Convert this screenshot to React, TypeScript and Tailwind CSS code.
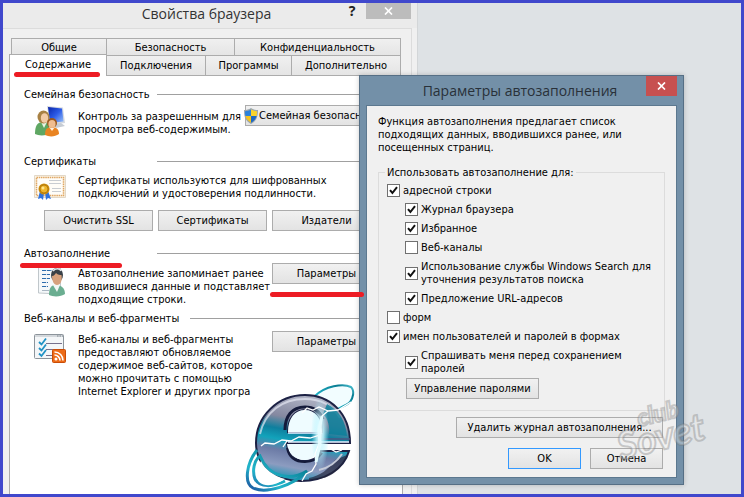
import React, { useId } from 'react';

const cx = (...parts: (string | false | undefined)[]) => parts.filter(Boolean).join(' ');

const Button = ({ children, className, primary }: { children: React.ReactNode; className?: string; primary?: boolean }) => (
  <button
    type="button"
    className={cx(
      'flex h-[21px] shrink-0 items-center whitespace-nowrap border bg-linear-to-b from-[#f1f1f1] to-[#e3e3e3]',
      primary ? 'border-[#3399ff]' : 'border-[#acacac]',
      className,
    )}
  >
    {children}
  </button>
);

const Check = ({ label, nested, checked }: { label: React.ReactNode; nested?: boolean; checked?: boolean }) => {
  const id = useId();
  return (
    <div className={cx('flex items-center gap-[3px]', nested && 'pl-[18px]')}>
      <span className="relative size-[13px] shrink-0">
        <input
          id={id}
          type="checkbox"
          defaultChecked={checked}
          className="peer block size-[13px] appearance-none border border-[#707070] bg-white"
        />
        <svg viewBox="0 0 13 13" className="pointer-events-none absolute inset-0 hidden peer-checked:block">
          <path d="M3 6.2 5.4 9 10 3.2" fill="none" stroke="#111" strokeWidth="2" />
        </svg>
      </span>
      <label htmlFor={id} className="whitespace-nowrap">{label}</label>
    </div>
  );
};

const Heading = ({ children, wide }: { children: React.ReactNode; wide?: boolean }) => (
  <div className="flex items-center">
    <h2 className={cx('shrink-0 whitespace-nowrap', wide ? 'w-[166px]' : 'w-[133px]')}>{children}</h2>
    <span className="h-px grow bg-[#a0a0a0]" />
  </div>
);

const FamilyIcon = () => (
  <svg width="32" height="32" viewBox="0 0 32 32">
    <defs>
      <linearGradient id="screen" x1="0" y1="0" x2="1" y2="1">
        <stop offset="0" stopColor="#0a24a8" />
        <stop offset=".5" stopColor="#2c5ce8" />
        <stop offset="1" stopColor="#9cc4f8" />
      </linearGradient>
    </defs>
    <path d="M13 1 29 2.500 31 18 16 20z" fill="#d5d9e0" />
    <path d="M14 2 28 3.500 29.500 16.500 16 18z" fill="url(#screen)" />
    <path d="m19 19 8-1 4 3-9 2z" fill="#c6ccd4" />
    <path d="M1 29c0-8 2-12 8-12 5 0 8 4 8 11-5 3-12 3-16 1z" fill="#5fa763" />
    <path d="m7 17 3 6 3-6z" fill="#e8f3e3" />
    <ellipse cx="9.500" cy="12" rx="6" ry="6.500" fill="#a88143" />
    <ellipse cx="10.500" cy="13" rx="3.700" ry="4.800" fill="#f3cba5" />
    <path d="M11 30c0-6 2-8 7-8s7 3 7 7c-4 3-10 3-14 1z" fill="#e98422" />
    <path d="m15 22 3 4 3-4z" fill="#fff2df" />
    <circle cx="18" cy="18" r="5" fill="#9a571c" />
    <ellipse cx="18" cy="19" rx="3.600" ry="4" fill="#f0bd8f" />
  </svg>
);

const CertificateIcon = () => (
  <svg width="32" height="27" viewBox="0 0 32 27">
    <path d="M.5 1.500h31v22H.5z" fill="#fbf3e4" stroke="#e2d8c8" />
    <path d="M2.500 3.500h27v18h-27z" fill="#fffdf8" stroke="#dfa663" strokeWidth="1.500" strokeDasharray="1.500 .7" />
    <path d="M15 6.500h12M15 9.500h12M18 14.500h9M18 17.500h9" stroke="#c9cdd2" />
    <path d="m6 17-2 8 3-1 2 2 1-7zM11 18l1 8 2-2 3 1-3-8z" fill="#2e72df" />
    <circle cx="10" cy="15" r="5.500" fill="#c98a0c" />
    <circle cx="10" cy="15" r="4" fill="#efb62c" stroke="#a46c05" strokeWidth=".7" />
    <circle cx="9" cy="14" r="1.500" fill="#ffe58c" />
  </svg>
);

const PersonIcon = () => (
  <svg width="28" height="30" viewBox="0 0 28 30">
    <path d="M.5 0h22v27l-22-1z" fill="#f5f8fa" stroke="#c0c7cb" />
    <path d="M4 3.500h10M4 7.500h8M4 11.500h8M4 15.500h6M4 19.500h6" stroke="#2d6cad" strokeWidth="1.200" strokeDasharray="4 .8" />
    <path d="M4 23.500h7" stroke="#aab7c3" />
    <path d="M11 28c0-7 2-10 7-10s9 3 9 9c-4 3-12 3-16 1z" fill="#6bae91" />
    <path d="m15 18 4 7 3-7z" fill="#f2f6f5" />
    <ellipse cx="19" cy="8" rx="6" ry="7" fill="#394047" />
    <path d="M14 9c2 0 3-2 4-3 2 2 4 2 5.500 2 1 6-1 10-4.500 10-3 0-5-4-5-9z" fill="#d6a17d" />
    <path d="M15 4c2-3 7-3 8 0" fill="none" stroke="#e1e5e8" strokeWidth="1.500" />
  </svg>
);

const FeedIcon = () => (
  <svg width="32" height="29" viewBox="0 0 32 29">
    <rect x=".5" y=".5" width="29" height="24" rx="1" fill="#f4f6f8" stroke="#8c949b" />
    <path d="M1 2h28" stroke="#d4d8dc" strokeWidth="2" />
    <path d="M23 2h1.500m1 0H27m1 0h1" stroke="#7c858d" />
    <path d="M12 9.500h16M12 15.500h12M12 21.500h6" stroke="#76708c" />
    <path d="m5 8 2.500 2.500L12 4.500M5 14l2.500 2.500 4.500-6M5 19.500 7.500 22l4.500-6" fill="none" stroke="#2192c5" strokeWidth="1.800" />
    <rect x="18.500" y="15.500" width="13" height="13" rx="1" fill="#ed6b17" stroke="#c94c07" />
    <circle cx="22" cy="25" r="1.500" fill="#fff" />
    <path d="M20.500 21c3 0 5.500 2.500 5.500 5.500M20.500 18c5 0 8.500 4 8.500 8.500" fill="none" stroke="#fff" strokeWidth="1.600" />
  </svg>
);

const ShieldIcon = () => (
  <svg width="14" height="16" viewBox="0 0 14 16" className="-ml-[2px] shrink-0">
    <path d="M7 0c2 1.500 4.500 2 7 2 0 7-1.500 11-7 14C1.500 13 0 9 0 2c2.500 0 5-.5 7-2z" fill="#9aa5ae" />
    <path d="M7 1.500V8H1.400C1.100 6.500 1 5 1 3.200c2.200 0 4.300-.6 6-1.700z" fill="#2a82da" />
    <path d="M7 1.500V8h5.600c.3-1.500.4-3 .4-4.800-2.200 0-4.300-.6-6-1.700z" fill="#f8d32b" />
    <path d="M7 8v6.700C4 13 2.200 11 1.400 8z" fill="#f4c41c" />
    <path d="M7 8v6.700c3-1.700 4.800-3.700 5.600-6.700z" fill="#1b68c4" />
  </svg>
);

const ExplorerLogo = () => (
  <svg width="106" height="112" viewBox="0 0 106 112" className="overflow-visible">
    <defs>
      <linearGradient id="body" x1=".6" y1="0" x2=".4" y2="1">
        <stop offset="0" stopColor="#b4b7c8" />
        <stop offset=".3" stopColor="#8488a0" />
        <stop offset=".44" stopColor="#0e7f9e" />
        <stop offset=".56" stopColor="#12a3bb" />
        <stop offset=".68" stopColor="#6c7ba6" />
        <stop offset=".85" stopColor="#8c9cc0" />
        <stop offset="1" stopColor="#1593b5" />
      </linearGradient>
      <linearGradient id="orbit" x1="0" y1="1" x2="1" y2="0">
        <stop offset="0" stopColor="#1c4c9c" />
        <stop offset=".3" stopColor="#22b6cb" />
        <stop offset=".8" stopColor="#087b91" />
        <stop offset="1" stopColor="#55cbdb" />
      </linearGradient>
      <radialGradient id="glow">
        <stop offset="0" stopColor="#fff" />
        <stop offset=".4" stopColor="#cdf8ff" stopOpacity=".8" />
        <stop offset="1" stopColor="#a7effa" stopOpacity="0" />
      </radialGradient>
    </defs>
    <path d="M66 14C76 4 94 1 102 5c4 4 2 11-1 15-4 4-12 6-18 10" fill="#f2fdff" stroke="url(#orbit)" strokeWidth="2" />
    <path
      fillRule="evenodd"
      d="M101 61C101 30 80 13 56 13 29 13 7 34 7 61c0 24 21 38 45 38 24 0 43-12 48-30H72c-3 7-9 10-16 10-11 0-18-8-18-18zM39 50c0-14 7-22 17-22s17 8 17 22z"
      fill="url(#body)"
      stroke="#1c2144"
      strokeWidth="2"
    />
    <path d="M39 50c0-14 7-22 17-22s17 8 17 22zM38 62h32c0 8-6 16-14 16-11 0-17-7-18-16z" fill="#effcff" />
    <path d="M11 52c5-22 22-35 45-35 16 0 28 7 35 19" fill="none" stroke="#e4e7f2" strokeWidth="2" opacity=".7" />
    <path d="M78 22c12 6 19 18 20 32L80 52c1-6-1-16-6-20z" fill="#0a7f9a" opacity=".85" />
    <path d="M36 48c0-14 7-23 20-23 9 0 15 5 18 12" fill="none" stroke="#141a3a" strokeWidth="3" />
    <path d="M39 51h34M39 60h61" stroke="#e8f0ff" strokeWidth="1.500" />
    <path d="M74 57h27" stroke="#4b5480" strokeWidth="1.500" />
    <path d="M38 66c2 10 9 14 18 14 7 0 13-3 17-9" fill="none" stroke="#141a3a" strokeWidth="2" />
    <path d="M60 96c11-2 20-9 26-18l12-5C92 89 80 98 60 98z" fill="#23263d" opacity=".7" />
    <path d="M70 88c9-2 17-7 23-16" fill="none" stroke="#c5cad8" strokeWidth="2" />
    <path
      d="M8 68C-3 82-5 101 4 106c13 6 40-2 54-17-16 10-38 7-47-15-6 4-8 15-5 23 5 9 18 8 30 2"
      fill="none"
      stroke="url(#orbit)"
      strokeWidth="3"
    />
    <path d="M12 79c4 9 13 15 24 18-9 6-19 9-26 3-4-6-2-14 2-21z" fill="#fff" />
    <ellipse cx="71" cy="52" rx="9" ry="36" fill="url(#glow)" />
    <path
      d="m102 20-13 8-10 1-6 5-2 14-1 14-4 10 1 10-4 7-6 3-4 7M79 29l-9-4-6 3-6-2-5 5M71 53l-10 3-11-1-8 4-9-1-8 4-9-1-4 3m26-5-4 6m46 1 7 4 6-2"
      fill="none"
      stroke="#fff"
      strokeWidth="1.300"
    />
    <path d="m73 34-3 14 1 14-4 18" fill="none" stroke="#e4fcff" strokeWidth="3" />
  </svg>
);

const Tab = ({ children, className }: { children: React.ReactNode; className?: string }) => (
  <button
    type="button"
    role="tab"
    className={cx('flex items-center justify-center border border-b-0 border-[#acacac] bg-linear-to-b from-[#f0f0f0] to-[#e5e5e5]', className)}
  >
    {children}
  </button>
);

const CloseMark = () => (
  <svg width="9" height="8" viewBox="0 0 9 8">
    <path d="m1 .5 7 7m0-7-7 7" stroke="#fff" strokeWidth="1.700" />
  </svg>
);

const BrowserProperties = () => (
  <section className="absolute -top-px bottom-0 left-0 w-[415px] border-r border-[#d3d6d8] bg-[#f0f0f0]">
    <header className="flex h-[26px] items-start justify-end bg-[#ebebeb] pr-[6px]">
      <h1 className="grow pt-[2px] pl-[130px] text-center font-[Open_Sans,Noto_Sans,sans-serif] text-[14px] leading-[20px] whitespace-nowrap text-[#333]">
        Свойства браузера
      </h1>
      <button type="button" aria-label="Справка" className="ml-[62px] w-5 font-[Noto_Sans,sans-serif] text-sm leading-[17px] font-bold text-[#222]">?</button>
      <button type="button" aria-label="Закрыть" className="ml-1 flex h-[17px] w-[45px] items-center justify-center bg-[#bcbcbc]">
        <CloseMark />
      </button>
    </header>
    <div className="mr-[5px] flex h-full flex-col border-t border-r border-[#dcdcdc] pt-[9px] pr-[8px] pl-[6px]">
      <div role="tablist" className="px-[2px]">
        <div className="flex h-[17px]">
          <Tab className="w-[95px] border-r-0">Общие</Tab>
          <Tab className="w-[128px] border-r-0">Безопасность</Tab>
          <Tab className="grow">Конфиденциальность</Tab>
        </div>
        <div className="flex h-[20px]">
          <button
            type="button"
            role="tab"
            aria-selected="true"
            className="z-10 -mt-px -ml-[2px] -mb-px w-[98px] border border-b-0 border-[#acacac] bg-white pb-[2px]"
          >
            Содержание
          </button>
          <Tab className="w-[99px] border-l-0">Подключения</Tab>
          <Tab className="w-[86px] border-l-0">Программы</Tab>
          <Tab className="grow border-l-0">Дополнительно</Tab>
        </div>
      </div>
      <div className="grow border border-b-0 border-[#acacac] bg-white pt-[12px] pr-[20px] pl-[14px]">
        <Heading>Семейная безопасность</Heading>
        <div className="mt-1 flex items-start">
          <div className="w-[54px] shrink-0 pl-[10px]"><FamilyIcon /></div>
          <p className="w-[167px] shrink-0 pt-[5px] whitespace-nowrap">Контроль за разрешенным для<br />просмотра веб-содержимым.</p>
          <Button className="w-[137px] gap-px"><ShieldIcon />Семейная безопасность</Button>
        </div>
        <div className="mt-[18px]"><Heading>Сертификаты</Heading></div>
        <div className="mt-[6px] flex items-start">
          <div className="w-[54px] shrink-0 pl-[10px]"><CertificateIcon /></div>
          <p className="whitespace-nowrap">Сертификаты используются для шифрованных<br />подключений и удостоверения подлинности.</p>
        </div>
        <div className="mt-[9px] flex gap-[5px] pl-5">
          <Button className="w-[109px] justify-center">Очистить SSL</Button>
          <Button className="w-[109px] justify-center">Сертификаты</Button>
          <Button className="w-[109px] justify-center">Издатели</Button>
        </div>
        <div className="mt-4"><Heading>Автозаполнение</Heading></div>
        <div className="mt-[3px] flex items-start">
          <div className="w-[54px] shrink-0 pt-1 pl-[14px]"><PersonIcon /></div>
          <p className="w-[194px] shrink-0 pt-1 whitespace-nowrap">Автозаполнение запоминает ранее<br />вводившиеся данные и подставляет<br />подходящие строки.</p>
          <Button className="w-[109px] justify-center">Параметры</Button>
        </div>
        <div className="mt-[6px]"><Heading wide>Веб-каналы и веб-фрагменты</Heading></div>
        <div className="mt-[6px] flex items-start">
          <div className="w-[54px] shrink-0 pt-[3px] pl-[10px]"><FeedIcon /></div>
          <p className="w-[194px] shrink-0 pt-[2px] whitespace-nowrap">
            Веб-каналы и веб-фрагменты<br />предоставляют обновляемое<br />содержимое веб-сайтов, которое<br />можно прочитать с помощью<br />Internet Explorer и других програ
          </p>
          <Button className="w-[109px] justify-center">Параметры</Button>
        </div>
      </div>
    </div>
  </section>
);

const AutofillDialog = () => (
  <section className="absolute top-[72px] left-[356px] w-[325px] border border-[#566f85] bg-[#7390a8] px-[6px] pb-[6px] shadow-[0_0_5px_rgba(0,0,0,0.2)]">
    <header className="flex h-[29px] items-start">
      <h1 className="grow pt-[5px] pl-[28px] text-center font-[Open_Sans,Noto_Sans,sans-serif] text-[14px] leading-[20px] whitespace-nowrap text-[#293139]">
        Параметры автозаполнения
      </h1>
      <button type="button" aria-label="Закрыть" className="flex h-5 w-[31px] shrink-0 items-center justify-center bg-[#c75050]">
        <CloseMark />
      </button>
    </header>
    <div className="border border-[#5c788f] bg-[#f0f0f0] px-[11px] pt-[9px] pb-[8px]">
      <p className="whitespace-nowrap">Функция автозаполнения предлагает список<br />подходящих данных, вводившихся ранее, или<br />посещенных страниц.</p>
      <fieldset className="mt-[12px] border border-[#dcdcdc] px-2 pb-[11px]">
        <legend className="-ml-[2px] px-[2px]">Использовать автозаполнение для:</legend>
        <div className="flex flex-col gap-[6px] pt-[5px]">
          <Check checked label="адресной строки" />
          <Check nested checked label="Журнал браузера" />
          <Check nested checked label="Избранное" />
          <Check nested label="Веб-каналы" />
          <Check nested checked label={<>Использование службы Windows Search для<br />уточнения результатов поиска</>} />
          <Check nested checked label="Предложение URL-адресов" />
          <Check label="форм" />
          <Check checked label="имен пользователей и паролей в формах" />
          <Check nested checked label={<>Спрашивать меня перед сохранением<br />паролей</>} />
        </div>
        <Button className="mt-[3px] ml-[19px] w-[133px] justify-center">Управление паролями</Button>
      </fieldset>
      <div className="mt-[6px] flex justify-end pr-[2px]">
        <Button className="w-[207px] justify-center">Удалить журнал автозаполнения...</Button>
      </div>
      <div className="mt-[10px] flex justify-end gap-[9px] pr-[2px]">
        <Button primary className="w-[73px] justify-center">OK</Button>
        <Button className="w-[73px] justify-center">Отмена</Button>
      </div>
    </div>
  </section>
);

const Watermark = () => (
  <svg width="130" height="100" viewBox="0 0 130 100" className="pointer-events-none absolute top-[376px] left-[600px] overflow-visible">
    <g
      transform="rotate(-14 60 48)"
      fill="#f0f0f0"
      fillOpacity=".35"
      stroke="#777"
      strokeOpacity=".35"
      strokeWidth="2"
      fontFamily="Lato, sans-serif"
      fontStyle="italic"
      fontWeight="bold"
    >
      <text x="37" y="42" fontSize="24">club</text>
      <text x="11" y="70" fontSize="38">Sovet</text>
    </g>
  </svg>
);

export default function App() {
  return (
    <main className="relative h-screen overflow-hidden border-3 border-[#4048cc] bg-[#dee2e5] font-['DejaVu_Sans_Condensed','DejaVu_Sans',sans-serif] text-[11px] leading-[13px] text-black">
      <BrowserProperties />
      <div className="absolute top-[379px] left-[246px]"><ExplorerLogo /></div>
      <AutofillDialog />
      {/* marker strokes */}
      <span className="absolute top-[69px] left-[11px] z-10 h-[5px] w-[86px] rounded-full bg-[#ed1c24]" />
      <span className="absolute top-[260px] left-[17px] h-[5px] w-[102px] rounded-full bg-[#ed1c24]" />
      <span className="absolute top-[289px] left-[267px] h-[5px] w-[94px] rounded-full bg-[#ed1c24]" />
      <Watermark />
    </main>
  );
}
